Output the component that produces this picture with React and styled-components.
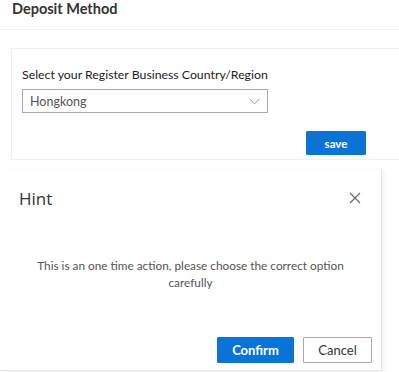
import React from "react";
import styled, { createGlobalStyle } from "styled-components";

const Global = createGlobalStyle`
  html, body { margin: 0; padding: 0; background: #fff; }
  body { font-family: "Lato", "Open Sans", sans-serif; color: #333; }
  * { box-sizing: border-box; }
`;

const Page = styled.div`
  width: 399px;
  height: 372px;
  overflow: hidden;
  display: flex;
  flex-direction: column;
`;

const Title = styled.h1`
  margin: 0;
  padding: 0 0 0 12px;
  height: 30px;
  font-size: 14.5px;
  font-weight: 700;
  line-height: 18px;
  color: #333;
  border-bottom: 1px solid #f2f2f2;
`;

const Card = styled.section`
  margin: 18px 0 0 11px;
  height: 112px;
  border: 1px solid #f0f0f0;
  border-right: none;
  padding: 17px 0 0 10px;
  display: flex;
  flex-direction: column;
`;

const Label = styled.div`
  font-size: 12.3px;
  line-height: 17px;
  color: #222;
`;

const Select = styled.div`
  margin-top: 6px;
  width: 246px;
  height: 24px;
  border: 1px solid #a9a9a9;
  display: flex;
  align-items: center;
  justify-content: space-between;
  padding: 0 7px;
  font-size: 12.5px;
  color: #555;
`;

const Actions = styled.div`
  display: flex;
  justify-content: flex-end;
  gap: ${(p) => p.gap || 0}px;
  padding-right: ${(p) => p.pr || 0}px;
  margin-top: ${(p) => p.mt || 0}px;
`;

const Button = styled.button`
  height: ${(p) => p.h || 24}px;
  width: ${(p) => p.w}px;
  border: 1px solid ${(p) => (p.primary ? "#0b73d3" : "#a9a9a9")};
  background: ${(p) => (p.primary ? "#0b73d3" : "#fff")};
  color: ${(p) => (p.primary ? "#fff" : "#333")};
  font-family: inherit;
  font-size: ${(p) => p.fs || 12}px;
  font-weight: ${(p) => (p.bold ? 700 : 400)};
  padding: 0;
  border-radius: 1px;
`;

const Dialog = styled.div`
  margin-top: 9px;
  width: 382px;
  height: 202px;
  border-right: 1px solid #e6e6e6;
  border-bottom: 1px solid #e6e6e6;
  box-shadow: 2px 2px 6px rgba(0, 0, 0, 0.06);
  background: #fff;
  display: flex;
  flex-direction: column;
`;

const DialogHead = styled.div`
  height: 58px;
  display: flex;
  align-items: center;
  justify-content: space-between;
  padding: 0 20px 0 19px;
`;

const DialogTitle = styled.div`
  font-family: "Open Sans", sans-serif;
  font-size: 17px;
  color: #333;
`;

const Message = styled.p`
  margin: 30px 0 0;
  padding: 0 20px;
  text-align: center;
  font-size: 11.8px;
  line-height: 17px;
  color: #555;
`;

export default function App() {
  return (
    <Page>
      <Global />
      <Title>Deposit Method</Title>
      <Card>
        <Label>Select your Register Business Country/Region</Label>
        <Select>
          <span>Hongkong</span>
          <svg width="11" height="7" viewBox="0 0 11 7" fill="none">
            <path d="M0.5 0.8L5.5 5.8L10.5 0.8" stroke="#9a9a9a" strokeWidth="1" />
          </svg>
        </Select>
        <Actions pr={33} mt={18}>
          <Button primary bold w={60} h={24} fs={11.5}>save</Button>
        </Actions>
      </Card>
      <Dialog>
        <DialogHead>
          <DialogTitle>Hint</DialogTitle>
          <svg width="12" height="12" viewBox="0 0 12 12">
            <path d="M1 1L11 11M11 1L1 11" stroke="#666" strokeWidth="1.1" />
          </svg>
        </DialogHead>
        <Message>
          This is an one time action, please choose the correct option carefully
        </Message>
        <Actions gap={9} pr={9} mt={46}>
          <Button primary bold w={77} h={26} fs={13}>Confirm</Button>
          <Button w={69} h={26} fs={13}>Cancel</Button>
        </Actions>
      </Dialog>
    </Page>
  );
}
